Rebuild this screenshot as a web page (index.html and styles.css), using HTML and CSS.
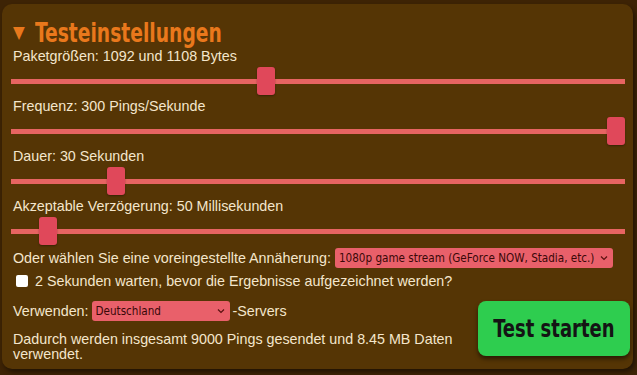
FILE: index.html
```html
<!DOCTYPE html>
<html lang="de">
<head>
<meta charset="utf-8">
<link rel="stylesheet" href="styles.css">
</head>
<body>
<section class="panel">
  <h2 class="title"><span class="tri">▼</span><span class="title-text">Testeinstellungen</span></h2>

  <div class="field">
    <div class="label">Paketgrößen: 1092 und 1108 Bytes</div>
    <input class="range" type="range" min="0" max="1000" value="413">
  </div>
  <div class="field">
    <div class="label">Frequenz: 300 Pings/Sekunde</div>
    <input class="range" type="range" min="0" max="1000" value="1000">
  </div>
  <div class="field">
    <div class="label">Dauer: 30 Sekunden</div>
    <input class="range" type="range" min="0" max="1000" value="161">
  </div>
  <div class="field">
    <div class="label">Akzeptable Verzögerung: 50 Millisekunden</div>
    <input class="range" type="range" min="0" max="1000" value="47">
  </div>

  <div class="preset">
    <span>Oder wählen Sie eine voreingestellte Annäherung:</span>
    <span class="sel sel-wide">
      <select><option>1080p game stream (GeForce NOW, Stadia, etc.)</option></select>
      <svg class="chev" width="8" height="6" viewBox="0 0 8 6"><path d="M1 1.5 L4 4.5 L7 1.5" fill="none" stroke="#5a1010" stroke-width="1.2"/></svg>
    </span>
  </div>
  <label class="check">
    <input type="checkbox">
    <span>2 Sekunden warten, bevor die Ergebnisse aufgezeichnet werden?</span>
  </label>

  <div class="bottom">
    <div class="info">
      <div class="server">
        <span>Verwenden:</span>
        <span class="sel sel-country">
          <select><option>Deutschland</option></select>
          <svg class="chev" width="8" height="6" viewBox="0 0 8 6"><path d="M1 1.5 L4 4.5 L7 1.5" fill="none" stroke="#5a1010" stroke-width="1.2"/></svg>
        </span>
        <span>-Servers</span>
      </div>
      <p class="summary">Dadurch werden insgesamt 9000 Pings gesendet und 8.45 MB Daten verwendet.</p>
    </div>
    <button class="start"><span class="start-text">Test starten</span></button>
  </div>
</section>
</body>
</html>
```

FILE: styles.css
```css
html, body {
  margin: 0;
  padding: 0;
  background: #3d2305;
  height: 100%;
  overflow: hidden;
}

body {
  font-family: "Liberation Sans", Arial, sans-serif;
  font-size: 14.3px;
  color: #f4e6cc;
}

.panel {
  margin: 4px 4px 0 2px;
  height: 365px;
  box-sizing: border-box;
  padding: 0 3px 0 9px;
  background: #553505;
  border-radius: 10px;
  box-shadow: 2px 3px 4px rgba(0, 0, 0, 0.45);
  display: flex;
  flex-direction: column;
}

.title {
  margin: 0;
  padding-top: 14px;
  height: 29px;
  line-height: 29px;
  font-family: "DejaVu Sans Condensed", "DejaVu Sans", sans-serif;
  font-weight: bold;
  color: #e9781c;
  padding-left: 2px;
  display: flex;
  align-items: center;
  white-space: nowrap;
}

.tri {
  font-size: 17px;
  width: 22px;
}

.title-text {
  display: inline-block;
  font-size: 27px;
  transform: scaleX(0.77);
  transform-origin: left center;
}

.field {
  display: flex;
  flex-direction: column;
  margin-right: 5px;
}

.label {
  line-height: 18px;
  height: 18px;
  padding-left: 2px;
}

.range {
  -webkit-appearance: none;
  appearance: none;
  display: block;
  width: 100%;
  height: 32px;
  margin: 0;
  background: transparent;
}

.range::-webkit-slider-runnable-track {
  height: 5px;
  background: #e76462;
  border: none;
}

.range::-webkit-slider-thumb {
  -webkit-appearance: none;
  appearance: none;
  width: 18px;
  height: 28px;
  margin-top: -11.5px;
  background: #e0485a;
  border-radius: 3px;
  box-shadow: 0 1px 2px rgba(0, 0, 0, 0.35);
}

.preset {
  display: flex;
  align-items: center;
  gap: 4px;
  height: 22px;
  padding-left: 2px;
  white-space: nowrap;
}

.sel {
  position: relative;
  display: inline-block;
}

.sel select {
  -webkit-appearance: none;
  appearance: none;
  display: block;
  height: 20px;
  margin: 0;
  border: none;
  border-radius: 3px;
  background: #e9606a;
  color: #3a0808;
  font-family: "DejaVu Sans Condensed", "DejaVu Sans", sans-serif;
  font-size: 11.6px;
  padding: 0 18px 0 4px;
}

.sel-wide select {
  width: 278px;
}

.sel-country select {
  width: 138px;
}

.chev {
  position: absolute;
  right: 5px;
  top: 7px;
  pointer-events: none;
}

.check {
  display: flex;
  align-items: center;
  height: 24px;
  padding-left: 4px;
}

.check input {
  -webkit-appearance: none;
  appearance: none;
  width: 12px;
  height: 12px;
  margin: 0 7px 0 1px;
  background: #ffffff;
  border-radius: 2px;
}

.bottom {
  display: flex;
  align-items: flex-start;
  gap: 18px;
  margin-top: 8px;
}

.info {
  flex: 1;
  padding-left: 2px;
}

.server {
  display: flex;
  align-items: center;
  gap: 3px;
  height: 20px;
}

.summary {
  margin: 11px 0 0;
  line-height: 15px;
}

.start {
  width: 152px;
  height: 55px;
  border: none;
  border-radius: 8px;
  background: #2ecd4f;
  color: #141414;
  font-family: "DejaVu Sans Condensed", "DejaVu Sans", sans-serif;
  font-weight: bold;
  box-shadow: 0 3px 4px rgba(0, 0, 0, 0.5);
  padding: 0;
  display: flex;
  align-items: center;
  justify-content: center;
}

.start-text {
  display: inline-block;
  font-size: 25px;
  transform: scaleX(0.8);
  white-space: nowrap;
}
```
